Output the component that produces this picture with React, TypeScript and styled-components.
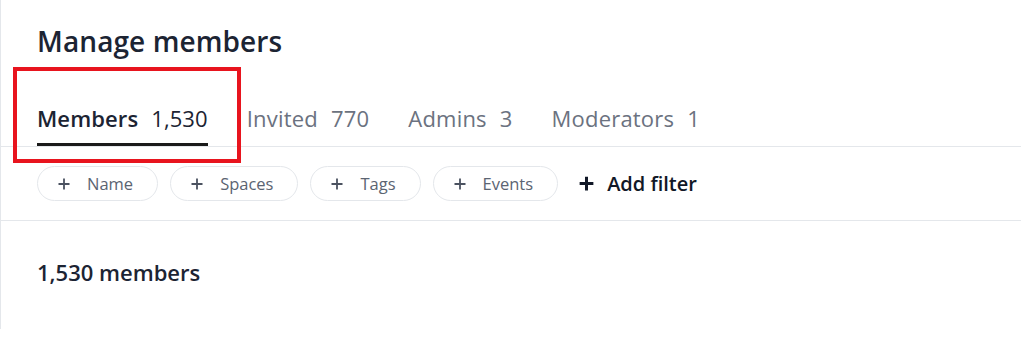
import React from 'react'
import styled, { createGlobalStyle } from 'styled-components'

const GlobalStyle = createGlobalStyle`
    html, body {
        margin: 0;
        padding: 0;
        background: #ffffff;
    }
    body {
        font-family: "Open Sans", "Noto Sans", Arial, sans-serif;
        -webkit-font-smoothing: antialiased;
    }
`

const tabs = [
    { label: 'Members', count: '1,530', active: true },
    { label: 'Invited', count: '770' },
    { label: 'Admins', count: '3' },
    { label: 'Moderators', count: '1' },
]

const filters = ['Name', 'Spaces', 'Tags', 'Events']

const PlusIcon = ({ size = 12, weight = 1.8 }: { size?: number; weight?: number }) => (
    <svg width={size} height={size} viewBox="0 0 12 12" fill="none">
        <path d="M6 0.5v11M0.5 6h11" stroke="currentColor" strokeWidth={weight} />
    </svg>
)

const App = () => {
    return <>
        <GlobalStyle />
        <Panel>
            <Header>
                <Title>Manage members</Title>
            </Header>
            <TabBar>
                {tabs.map(t => (
                    <Tab key={t.label} active={!!t.active}>
                        {t.label}
                        <Count>{t.count}</Count>
                    </Tab>
                ))}
            </TabBar>
            <FilterRow>
                {filters.map(f => (
                    <Chip key={f}>
                        <PlusIcon />
                        <span>{f}</span>
                    </Chip>
                ))}
                <AddFilter>
                    <PlusIcon size={15} weight={2.4} />
                    <span>Add filter</span>
                </AddFilter>
            </FilterRow>
            <Summary>1,530 members</Summary>
            <Highlight />
        </Panel>
    </>
}

export default App

const Panel = styled.div`
    position: relative;
    width: 1021px;
    height: 329px;
    border-left: 1px solid #e4e7eb;
    box-sizing: border-box;
    background: #ffffff;
    color: #1c2433;
`

const Header = styled.div`
    padding: 23px 36px 0;
    height: 66px;
    box-sizing: border-box;
`

const Title = styled.h1`
    margin: 0;
    font-size: 28px;
    line-height: 36px;
    font-weight: 600;
    letter-spacing: 0.1px;
    color: #1c2433;
`

const TabBar = styled.div`
    display: flex;
    align-items: flex-end;
    gap: 39px;
    padding: 0 36px;
    height: 81px;
    box-sizing: border-box;
    border-bottom: 1px solid #e4e7eb;
`

const Tab = styled.div<{ active: boolean }>`
    display: flex;
    align-items: center;
    height: 30px;
    line-height: 30px;
    padding-bottom: 10px;
    font-size: 22px;
    letter-spacing: ${({ active }) => (active ? '0.1px' : '0.2px')};
    font-weight: ${({ active }) => (active ? 600 : 400)};
    color: ${({ active }) => (active ? '#1c2433' : '#6b7280')};
    border-bottom: 3px solid ${({ active }) => (active ? '#1a1a1a' : 'transparent')};
`

const Count = styled.span`
    margin-left: 13px;
    font-weight: 400;
`

const Highlight = styled.div`
    position: absolute;
    left: 12px;
    top: 67px;
    width: 228px;
    height: 96px;
    border: 4px solid #e8141e;
    box-sizing: border-box;
    pointer-events: none;
`

const FilterRow = styled.div`
    display: flex;
    align-items: center;
    gap: 12px;
    padding: 0 36px;
    height: 74px;
    box-sizing: border-box;
    border-bottom: 1px solid #e4e7eb;
`

const Chip = styled.div`
    display: flex;
    align-items: center;
    gap: 17px;
    height: 35px;
    padding: 0 24px 0 20px;
    box-sizing: border-box;
    border: 1px solid #e4e7eb;
    border-radius: 18px;
    font-size: 16.5px;
    color: #5b6472;
    svg {
        color: #4b5260;
    }
`

const AddFilter = styled.div`
    display: flex;
    align-items: center;
    gap: 13px;
    margin-left: 9px;
    font-size: 20px;
    font-weight: 600;
    color: #111827;
`

const Summary = styled.div`
    padding: 36px 36px 0;
    font-size: 22px;
    line-height: 30px;
    font-weight: 600;
    color: #1c2433;
`
